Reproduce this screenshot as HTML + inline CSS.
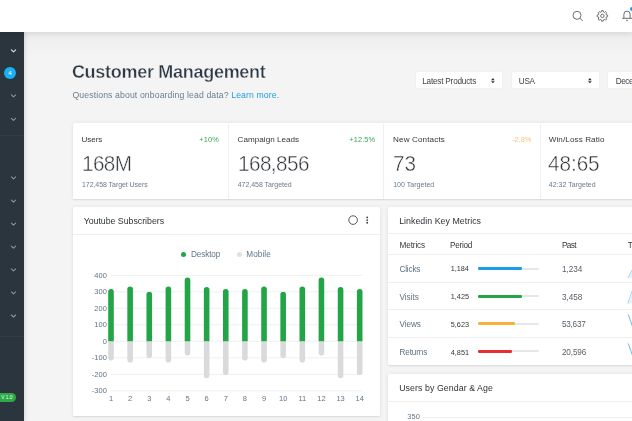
<!DOCTYPE html>
<html>
<head>
<meta charset="utf-8">
<style>
*{box-sizing:border-box;margin:0;padding:0}
html,body{width:632px;height:421px;overflow:hidden;background:#f4f4f4;font-family:"Liberation Sans",sans-serif;}
body{position:relative}
.abs{position:absolute;white-space:nowrap;line-height:1}
#hdr{position:absolute;left:0;top:0;width:632px;height:32px;background:#fff;box-shadow:0 1px 6px rgba(0,0,0,.10);z-index:3}
#side{position:absolute;left:0;top:32px;width:24.400px;height:389px;background:#2b353d;box-shadow:1px 0 4px rgba(0,0,0,.12);z-index:2}
#shade{position:absolute;left:0;top:32px;width:632px;height:26px;background:linear-gradient(#eaeaea,#f0f0f0 35%,#f4f4f4);z-index:0}
.card{position:absolute;background:#fff;border-radius:1.5px;box-shadow:0 0 4px rgba(0,0,0,.07), 0 1px 1.5px rgba(0,0,0,.08)}
.hline{position:absolute;height:1px;background:#efefef}
.vline{position:absolute;width:1px;background:#efefef}
.dd{position:absolute;top:71.700px;height:16.800px;background:#fff;border-radius:1.500px;box-shadow:0 0 2px rgba(0,0,0,.06)}
.track{position:absolute;left:478.2px;width:61.2px;height:2px;border-radius:1px;background:#e6e7e8}
.fill{position:absolute;left:0;top:-.3px;height:2.6px;border-radius:1.3px}
</style>
</head>
<body>
<div id="shade"></div>
<div id="hdr">
<svg class="abs" style="left:570px;top:8px" width="62" height="18" viewBox="570 8 62 18" fill="none" stroke="#6e6e6e" stroke-width="1">
<circle cx="577" cy="15.3" r="4"/><path d="M580 18.3l2.600 2.600"/>
<circle cx="602.4" cy="15.9" r="1.7"/>
<path stroke-linejoin="round" d="M601.57 10.67L603.23 10.67L603.42 11.93L604.49 12.37L605.52 11.61L606.69 12.78L605.93 13.81L606.37 14.88L607.63 15.07L607.63 16.73L606.37 16.92L605.93 17.99L606.69 19.02L605.52 20.19L604.49 19.43L603.42 19.87L603.23 21.13L601.57 21.13L601.38 19.87L600.31 19.43L599.28 20.19L598.11 19.02L598.87 17.99L598.43 16.92L597.17 16.73L597.17 15.07L598.43 14.88L598.87 13.81L598.11 12.78L599.28 11.61L600.31 12.37L601.38 11.93z"/>
<path d="M622.2 18.300H633M623.900 18.300V14.200a3.100 3.100 0 0 1 6.200 0V18.300"/>
<path d="M626.100 20.300h1.800"/>
</svg>
<div class="abs" style="left:630.400px;top:7.400px;width:3.200px;height:3.200px;border-radius:2px;background:#1e9be3"></div>
</div>

<div id="side">
<svg class="abs" style="left:0;top:0" width="25" height="389" viewBox="0 32 25 389" fill="none" stroke-width="1.2" stroke-linecap="round" stroke-linejoin="round">
<path d="M11.400 49.9l2.100 2 2.100-2" stroke="#d9dee2"/>
<g stroke="#8995a0" stroke-width="1.1">
<path d="M11.400 94.8l2.100 2 2.100-2"/>
<path d="M11.400 118.3l2.100 2 2.100-2"/>
<path d="M11.400 176.9l2.100 2 2.100-2"/>
<path d="M11.400 200.1l2.100 2 2.100-2"/>
<path d="M11.400 223.1l2.100 2 2.100-2"/>
<path d="M11.400 246.1l2.100 2 2.100-2"/>
<path d="M11.400 268.9l2.100 2 2.100-2"/>
<path d="M11.400 291.9l2.100 2 2.100-2"/>
<path d="M11.400 315.0l2.100 2 2.100-2"/>
</g>
</svg>
<div class="abs" style="left:0;top:103px;width:24.400px;height:1px;background:#313c45"></div>
<div class="abs" style="left:0;top:304px;width:24.400px;height:1px;background:#313c45"></div>
<div class="abs" style="left:3.800px;top:35.200px;width:12.200px;height:12.200px;border-radius:7px;background:#1bb0f2"></div><div class="abs" style="left:8.300px;top:38.400px;color:#fff;font-size:6px">4</div>
<div class="abs" style="left:-5px;top:361px;width:20.800px;height:9.400px;border-radius:5px;background:#2eaa4a;color:#e8ffe8;font-size:4.800px;line-height:9.400px;padding-left:6.300px">V 1.0</div>
</div>

<!-- dropdowns -->
<div class="dd" style="left:415.500px;width:86.500px">
<svg class="abs" style="left:75.700px;top:6px" width="3.800" height="5.400" viewBox="0 0 5 7"><path d="M2.500 0l2.400 2.900h-4.800zM2.500 7l2.400-2.900h-4.800z" fill="#333"/></svg></div>
<div class="dd" style="left:512px;width:87.200px">
<svg class="abs" style="left:76.400px;top:6px" width="3.800" height="5.400" viewBox="0 0 5 7"><path d="M2.500 0l2.400 2.900h-4.800zM2.500 7l2.400-2.900h-4.800z" fill="#333"/></svg></div>
<div class="dd" style="left:608.100px;width:60px"></div>

<!-- stat cards -->
<div class="card" style="left:72.500px;top:123.300px;width:600px;height:75.300px"></div>
<div class="vline" style="left:227.600px;top:123.500px;height:75px"></div>
<div class="vline" style="left:383.300px;top:123.500px;height:75px"></div>
<div class="vline" style="left:539.800px;top:123.500px;height:75px"></div>

<!-- Youtube card -->
<div class="card" style="left:72.500px;top:207.200px;width:307px;height:209.200px"></div>
<div class="hline" style="left:72.500px;top:234.400px;width:307px"></div>
<svg class="abs" style="left:346px;top:213px" width="26" height="14" viewBox="346 213 26 14"><circle cx="353.100" cy="220.100" r="4.300" fill="none" stroke="#555" stroke-width="1"/><circle cx="367.200" cy="217.400" r=".95" fill="#444"/><circle cx="367.200" cy="220.100" r=".95" fill="#444"/><circle cx="367.200" cy="222.800" r=".95" fill="#444"/></svg>

<div class="abs" style="left:181.300px;top:251.600px;width:5.200px;height:5.200px;border-radius:3px;background:#22a447"></div>
<div class="abs" style="left:237.300px;top:251.600px;width:5.200px;height:5.200px;border-radius:3px;background:#e0e1e1"></div>

<svg class="abs" style="left:72px;top:262px" width="308" height="150" viewBox="72 262 308 150">
<g stroke="#efefef" stroke-width="1">
<path d="M110.5 275.300H362.500M110.5 291.800H362.500M110.5 308.300H362.500M110.5 324.800H362.500M110.5 341.300H362.500M110.5 357.800H362.500M110.5 374.300H362.500M110.5 390.800H362.500"/>
</g>
<g>
<path fill="#d9dbdb" d="M108.20 341.3V357.7a2.8 2.8 0 0 0 5.6 0V341.3z"/>
<path fill="#22a447" d="M108.20 341.3V291.9a2.8 2.8 0 0 1 5.6 0V341.3z"/>
<path fill="#d9dbdb" d="M127.33 341.3V359.8a2.8 2.8 0 0 0 5.6 0V341.3z"/>
<path fill="#22a447" d="M127.33 341.3V289.3a2.8 2.8 0 0 1 5.6 0V341.3z"/>
<path fill="#d9dbdb" d="M146.46 341.3V355.2a2.8 2.8 0 0 0 5.6 0V341.3z"/>
<path fill="#22a447" d="M146.46 341.3V294.6a2.8 2.8 0 0 1 5.6 0V341.3z"/>
<path fill="#d9dbdb" d="M165.59 341.3V359.8a2.8 2.8 0 0 0 5.6 0V341.3z"/>
<path fill="#22a447" d="M165.59 341.3V289.2a2.8 2.8 0 0 1 5.6 0V341.3z"/>
<path fill="#d9dbdb" d="M184.72 341.3V352.7a2.8 2.8 0 0 0 5.6 0V341.3z"/>
<path fill="#22a447" d="M184.72 341.3V280.2a2.8 2.8 0 0 1 5.6 0V341.3z"/>
<path fill="#d9dbdb" d="M203.85 341.3V375.5a2.8 2.8 0 0 0 5.6 0V341.3z"/>
<path fill="#22a447" d="M203.85 341.3V289.7a2.8 2.8 0 0 1 5.6 0V341.3z"/>
<path fill="#d9dbdb" d="M222.98 341.3V372.3a2.8 2.8 0 0 0 5.6 0V341.3z"/>
<path fill="#22a447" d="M222.98 341.3V291.9a2.8 2.8 0 0 1 5.6 0V341.3z"/>
<path fill="#d9dbdb" d="M242.11 341.3V357.7a2.8 2.8 0 0 0 5.6 0V341.3z"/>
<path fill="#22a447" d="M242.11 341.3V291.9a2.8 2.8 0 0 1 5.6 0V341.3z"/>
<path fill="#d9dbdb" d="M261.24 341.3V359.8a2.8 2.8 0 0 0 5.6 0V341.3z"/>
<path fill="#22a447" d="M261.24 341.3V289.3a2.8 2.8 0 0 1 5.6 0V341.3z"/>
<path fill="#d9dbdb" d="M280.37 341.3V355.2a2.8 2.8 0 0 0 5.6 0V341.3z"/>
<path fill="#22a447" d="M280.37 341.3V294.6a2.8 2.8 0 0 1 5.6 0V341.3z"/>
<path fill="#d9dbdb" d="M299.50 341.3V359.8a2.8 2.8 0 0 0 5.6 0V341.3z"/>
<path fill="#22a447" d="M299.50 341.3V289.2a2.8 2.8 0 0 1 5.6 0V341.3z"/>
<path fill="#d9dbdb" d="M318.63 341.3V352.7a2.8 2.8 0 0 0 5.6 0V341.3z"/>
<path fill="#22a447" d="M318.63 341.3V280.2a2.8 2.8 0 0 1 5.6 0V341.3z"/>
<path fill="#d9dbdb" d="M337.76 341.3V375.5a2.8 2.8 0 0 0 5.6 0V341.3z"/>
<path fill="#22a447" d="M337.76 341.3V289.7a2.8 2.8 0 0 1 5.6 0V341.3z"/>
<path fill="#d9dbdb" d="M356.89 341.3V372.3a2.8 2.8 0 0 0 5.6 0V341.3z"/>
<path fill="#22a447" d="M356.89 341.3V291.9a2.8 2.8 0 0 1 5.6 0V341.3z"/>
</g>
</svg>

<!-- Linkedin card -->
<div class="card" style="left:388.200px;top:207.200px;width:300px;height:157.700px"></div>
<div class="hline" style="left:388px;top:233px;width:244px"></div>
<div class="hline" style="left:388px;top:254.300px;width:244px"></div>
<div class="hline" style="left:388px;top:281.700px;width:244px"></div>
<div class="hline" style="left:388px;top:309.300px;width:244px"></div>
<div class="hline" style="left:388px;top:336.800px;width:244px"></div>

<div class="track" style="top:267.750px"><div class="fill" style="width:43.400px;background:#1b9de8"></div></div>
<div class="track" style="top:295.250px"><div class="fill" style="width:43.400px;background:#22a447"></div></div>
<div class="track" style="top:322.750px"><div class="fill" style="width:36.400px;background:#fbb03b"></div></div>
<div class="track" style="top:350.250px"><div class="fill" style="width:33.500px;background:#e5312d"></div></div>

<svg class="abs" style="left:620px;top:258px" width="12" height="100" viewBox="620 258 12 100" fill="none" stroke="#55b6ea" stroke-width=".9">
<path d="M628 278l4.500-8.200"/><path d="M628 303.500l4.300-12.500"/><path d="M628.300 314.500l4 11.500"/><path d="M628.300 343.500l4 11.500"/>
<path d="M628 278l4.500-8.200v8.200zM628 303.500l4.300-12.500v12.500z" fill="#e3f3fc" stroke="none"/>
</svg>

<!-- Users by gender card -->
<div class="card" style="left:388.200px;top:374px;width:300px;height:100px"></div>
<div class="hline" style="left:388px;top:400.500px;width:244px"></div>
<div class="hline" style="left:423px;top:416.500px;width:209px;background:#efefef"></div>

<div id="tx" style="position:absolute;left:0;top:0;width:632px;height:421px;will-change:transform;z-index:1">
<div class="abs" style="left:71.92px;top:63.00px;font-size:18px;font-weight:bold;color:#2c3946;-webkit-text-stroke:.35px #f4f4f4;letter-spacing:-0.286px;">Customer Management</div>
<div class="abs" style="left:72.48px;top:91.00px;font-size:8.7px;color:#6c7f8e;letter-spacing:0.110px;">Questions about onboarding lead data? <span style="color:#1b9de2">Learn more.</span></div>
<div class="abs" style="left:422.21px;top:78.00px;font-size:8.2px;color:#3a3f44;letter-spacing:-0.204px;">Latest Products</div>
<div class="abs" style="left:518.81px;top:78.00px;font-size:8.2px;color:#3a3f44;letter-spacing:-0.302px;">USA</div>
<div class="abs" style="left:615.71px;top:78.00px;font-size:8.2px;color:#3a3f44;letter-spacing:-0.405px;">December</div>
<div class="abs" style="left:81.61px;top:136.00px;font-size:8.1px;color:#32373b;letter-spacing:-0.122px;">Users</div>
<div class="abs" style="left:237.61px;top:136.00px;font-size:8.1px;color:#32373b;letter-spacing:0.023px;">Campaign Leads</div>
<div class="abs" style="left:393.11px;top:136.00px;font-size:8.1px;color:#32373b;letter-spacing:0.120px;">New Contacts</div>
<div class="abs" style="left:548.71px;top:136.00px;font-size:8.1px;color:#32373b;letter-spacing:0.099px;">Win/Loss Ratio</div>
<div class="abs" style="left:199.36px;top:136.00px;font-size:7.4px;color:#35aa54;letter-spacing:0.139px;">+10%</div>
<div class="abs" style="left:349.26px;top:136.00px;font-size:7.4px;color:#35aa54;letter-spacing:0.131px;">+12.5%</div>
<div class="abs" style="left:512.16px;top:136.00px;font-size:7.4px;color:#fbc27c;letter-spacing:-0.049px;">-2.8%</div>
<div class="abs" style="left:81.58px;top:153.00px;font-size:22px;color:#33373b;-webkit-text-stroke:.45px #fff;letter-spacing:-0.629px;transform:scaleX(0.94);transform-origin:0 0;">168M</div>
<div class="abs" style="left:238.28px;top:153.00px;font-size:22px;color:#33373b;-webkit-text-stroke:.45px #fff;letter-spacing:-0.590px;transform:scaleX(0.94);transform-origin:0 0;">168,856</div>
<div class="abs" style="left:392.78px;top:153.00px;font-size:22px;color:#33373b;-webkit-text-stroke:.45px #fff;letter-spacing:-0.019px;transform:scaleX(0.94);transform-origin:0 0;">73</div>
<div class="abs" style="left:548.38px;top:153.00px;font-size:22px;color:#33373b;-webkit-text-stroke:.45px #fff;letter-spacing:-0.038px;transform:scaleX(0.94);transform-origin:0 0;">48:65</div>
<div class="abs" style="left:81.98px;top:181.00px;font-size:7px;color:#677b8b;letter-spacing:-0.059px;">172,458 Target Users</div>
<div class="abs" style="left:237.68px;top:181.00px;font-size:7px;color:#677b8b;letter-spacing:-0.022px;">472,458 Targeted</div>
<div class="abs" style="left:393.18px;top:181.00px;font-size:7px;color:#677b8b;letter-spacing:0.032px;">100 Targeted</div>
<div class="abs" style="left:548.78px;top:181.00px;font-size:7px;color:#677b8b;letter-spacing:0.025px;">42:32 Targeted</div>
<div class="abs" style="left:83.67px;top:217.00px;font-size:8.8px;color:#2f3438;letter-spacing:-0.025px;">Youtube Subscribers</div>
<div class="abs" style="left:399.17px;top:217.00px;font-size:8.8px;color:#2f3438;letter-spacing:0.036px;">Linkedin Key Metrics</div>
<div class="abs" style="left:399.17px;top:384.00px;font-size:8.8px;color:#2f3438;letter-spacing:0.065px;">Users by Gendar &amp; Age</div>
<div class="abs" style="left:190.91px;top:251.00px;font-size:8.2px;color:#5f7689;letter-spacing:-0.101px;">Desktop</div>
<div class="abs" style="left:246.31px;top:251.00px;font-size:8.2px;color:#5f7689;letter-spacing:0.069px;">Mobile</div>
<div class="abs" style="left:399.51px;top:242.00px;font-size:8.2px;color:#32373b;letter-spacing:-0.122px;">Metrics</div>
<div class="abs" style="left:450.11px;top:242.00px;font-size:8.2px;color:#32373b;letter-spacing:-0.272px;">Period</div>
<div class="abs" style="left:561.91px;top:242.00px;font-size:8.2px;color:#32373b;letter-spacing:-0.563px;">Past</div>
<div class="abs" style="left:627.71px;top:242.00px;font-size:8.2px;color:#32373b;letter-spacing:-0.311px;">Trend</div>
<div class="abs" style="left:399.51px;top:266.00px;font-size:8.2px;color:#5c7080;letter-spacing:-0.184px;">Clicks</div>
<div class="abs" style="left:450.66px;top:265.00px;font-size:7.3px;color:#32373b;letter-spacing:-0.042px;">1,184</div>
<div class="abs" style="left:561.91px;top:266.00px;font-size:8.2px;color:#5a6168;letter-spacing:-0.032px;">1,234</div>
<div class="abs" style="left:399.51px;top:294.00px;font-size:8.2px;color:#5c7080;letter-spacing:-0.014px;">Visits</div>
<div class="abs" style="left:450.66px;top:293.00px;font-size:7.3px;color:#32373b;letter-spacing:0.038px;">1,425</div>
<div class="abs" style="left:561.91px;top:294.00px;font-size:8.2px;color:#5a6168;letter-spacing:0.008px;">3,458</div>
<div class="abs" style="left:399.51px;top:321.00px;font-size:8.2px;color:#5c7080;letter-spacing:-0.093px;">Views</div>
<div class="abs" style="left:450.66px;top:321.00px;font-size:7.3px;color:#32373b;letter-spacing:0.058px;">5,623</div>
<div class="abs" style="left:561.91px;top:321.00px;font-size:8.2px;color:#5a6168;letter-spacing:-0.235px;">53,637</div>
<div class="abs" style="left:399.51px;top:349.00px;font-size:8.2px;color:#5c7080;letter-spacing:-0.133px;">Returns</div>
<div class="abs" style="left:450.66px;top:349.00px;font-size:7.3px;color:#32373b;letter-spacing:0.058px;">4,851</div>
<div class="abs" style="left:561.91px;top:349.00px;font-size:8.2px;color:#5a6168;letter-spacing:-0.118px;">20,596</div>
<div class="abs" style="right:525.20px;top:272.00px;font-size:7.5px;color:#5f7689;">400</div>
<div class="abs" style="right:525.20px;top:288.00px;font-size:7.5px;color:#5f7689;">300</div>
<div class="abs" style="right:525.20px;top:305.00px;font-size:7.5px;color:#5f7689;">200</div>
<div class="abs" style="right:525.20px;top:321.00px;font-size:7.5px;color:#5f7689;">100</div>
<div class="abs" style="right:525.20px;top:338.00px;font-size:7.5px;color:#5f7689;">0</div>
<div class="abs" style="right:525.20px;top:354.00px;font-size:7.5px;color:#5f7689;">-100</div>
<div class="abs" style="right:525.20px;top:371.00px;font-size:7.5px;color:#5f7689;">-200</div>
<div class="abs" style="right:525.20px;top:387.00px;font-size:7.5px;color:#5f7689;">-300</div>
<div class="abs" style="left:101.00px;top:395.00px;width:20px;text-align:center;font-size:7.5px;color:#5f7689;">1</div>
<div class="abs" style="left:120.13px;top:395.00px;width:20px;text-align:center;font-size:7.5px;color:#5f7689;">2</div>
<div class="abs" style="left:139.26px;top:395.00px;width:20px;text-align:center;font-size:7.5px;color:#5f7689;">3</div>
<div class="abs" style="left:158.39px;top:395.00px;width:20px;text-align:center;font-size:7.5px;color:#5f7689;">4</div>
<div class="abs" style="left:177.52px;top:395.00px;width:20px;text-align:center;font-size:7.5px;color:#5f7689;">5</div>
<div class="abs" style="left:196.65px;top:395.00px;width:20px;text-align:center;font-size:7.5px;color:#5f7689;">6</div>
<div class="abs" style="left:215.78px;top:395.00px;width:20px;text-align:center;font-size:7.5px;color:#5f7689;">7</div>
<div class="abs" style="left:234.91px;top:395.00px;width:20px;text-align:center;font-size:7.5px;color:#5f7689;">8</div>
<div class="abs" style="left:254.04px;top:395.00px;width:20px;text-align:center;font-size:7.5px;color:#5f7689;">9</div>
<div class="abs" style="left:273.17px;top:395.00px;width:20px;text-align:center;font-size:7.5px;color:#5f7689;">10</div>
<div class="abs" style="left:292.30px;top:395.00px;width:20px;text-align:center;font-size:7.5px;color:#5f7689;">11</div>
<div class="abs" style="left:311.43px;top:395.00px;width:20px;text-align:center;font-size:7.5px;color:#5f7689;">12</div>
<div class="abs" style="left:330.56px;top:395.00px;width:20px;text-align:center;font-size:7.5px;color:#5f7689;">13</div>
<div class="abs" style="left:349.69px;top:395.00px;width:20px;text-align:center;font-size:7.5px;color:#5f7689;">14</div>
<div class="abs" style="left:407.35px;top:413.00px;font-size:7.5px;color:#5f7689;letter-spacing:0.020px;">350</div>
</div>
</body>
</html>
